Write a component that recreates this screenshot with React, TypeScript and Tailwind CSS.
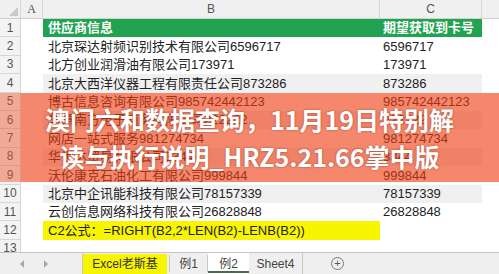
import React from "react";

const rows: { b: string; c: string; gray?: boolean }[] = [
  { b: "北京琛达射频识别技术有限公司6596717", c: "6596717" },
  { b: "北方创业润滑油有限公司173971", c: "173971" },
  { b: "北京大西洋仪器工程有限责任公司873286", c: "873286", gray: true },
  { b: "博古信息咨询有限公司985742442123", c: "985742442123" },
  { b: "华意南方电子商务有限公司222222", c: "222222", gray: true },
  { b: "网店一站式服务981274734", c: "981274734" },
  { b: "华世达贸易有限公司3344", c: "3344", gray: true },
  { b: "沃伦康克石油化工有限公司999844", c: "999844" },
  { b: "北京中企讯能科技有限公司78157339", c: "78157339", gray: true },
  { b: "云创信息网络科技有限公司26828848", c: "26828848" },
];

const font = "font-['Liberation_Sans','Noto_Sans_CJK_SC',sans-serif]";

function RowNum({ n }: { n: number }) {
  return (
    <div className="w-[21px] shrink-0 flex items-center justify-center bg-[#f3f3f3] border-r border-b border-[#d6d6d6] text-[12px] text-[#555]">
      {n}
    </div>
  );
}

export default function App() {
  return (
    <div className={`w-[499px] h-[274px] overflow-hidden flex flex-col bg-white ${font}`}>
      <div className="relative flex-1 overflow-hidden">
        {/* column header */}
        <div className="flex h-[19px] bg-[#f0f0f0] border-b border-[#d0d0d0] text-[12px] text-[#555]">
          <div className="relative w-[21px] shrink-0 border-r border-[#d6d6d6]">
            <div className="absolute right-[2px] bottom-[2px] w-0 h-0 border-l-[9px] border-l-transparent border-b-[9px] border-b-[#c8c8c8]" />
          </div>
          <div className="w-[22px] shrink-0 flex items-center justify-center border-r border-[#d6d6d6] font-['Liberation_Serif',serif]">A</div>
          <div className="w-[337px] shrink-0 flex items-center justify-center border-r border-[#d6d6d6]">B</div>
          <div className="w-[102px] shrink-0 flex items-center justify-center border-r border-[#d6d6d6]">C</div>
          <div className="flex-1" />
        </div>
        {/* row 1 */}
        <div className="flex h-[18.4px]">
          <RowNum n={1} />
          <div className="w-[22px] shrink-0" />
          <div className="w-[337px] shrink-0 bg-[#22a352] text-white font-bold text-[13px] pl-[5px] flex items-center">供应商信息</div>
          <div className="w-[102px] shrink-0 bg-[#22a352] text-white font-bold text-[13px] pl-[3px] flex items-center">期望获取到卡号</div>
          <div className="flex-1" />
        </div>
        {rows.map((r, i) => (
          <div key={i} className="flex h-[18.4px]">
            <RowNum n={i + 2} />
            <div className="w-[22px] shrink-0" />
            <div className={`w-[337px] shrink-0 text-[13px] text-[#222] pl-[5px] flex items-center whitespace-nowrap ${r.gray ? "bg-[#f0f0f0]" : ""}`}>{r.b}</div>
            <div className={`w-[102px] shrink-0 text-[13px] text-[#222] pl-[3px] flex items-center ${r.gray ? "bg-[#f0f0f0]" : ""}`}>{r.c}</div>
            <div className="flex-1" />
          </div>
        ))}
        {/* row 12 */}
        <div className="flex h-[18.4px]">
          <RowNum n={12} />
          <div className="w-[22px] shrink-0" />
          <div className="w-[337px] shrink-0 bg-[#f8f500] text-[13px] text-[#222] pl-[5px] flex items-center whitespace-nowrap">C2公式：=RIGHT(B2,2*LEN(B2)-LENB(B2))</div>
          <div className="w-[102px] shrink-0" />
          <div className="flex-1" />
        </div>
        <div className="flex h-[18.4px]">
          <RowNum n={13} />
        </div>

        {/* overlay banner */}
        <div className="absolute left-0 right-0 top-[93px] h-[89px] flex">
          <div className="w-[21px] bg-[rgba(240,80,40,0.45)]" />
          <div className="flex-1 bg-[rgba(237,61,18,0.62)]" />
        </div>
        <div className="absolute left-0 right-0 top-[93px] h-[89px] flex flex-col items-center justify-center text-white font-bold text-[25px] leading-[37px] font-['Noto_Sans_CJK_SC',sans-serif] [text-shadow:0_0_2px_rgba(90,20,0,0.55)] whitespace-nowrap">
          <div>澳门六和数据查询，11月19日特别解</div>
          <div>读与执行说明_HRZ5.21.66掌中版</div>
        </div>
      </div>

      {/* sheet tabs */}
      <div className="h-[22px] shrink-0 flex items-stretch bg-[#efefef] border-t border-[#c4c4c4] text-[12px] text-[#333]">
        <div className="w-[83px] shrink-0 flex items-center border-r border-[#c8c8c8]">
          <div className="ml-[20px] w-0 h-0 border-y-[4px] border-y-transparent border-r-[4px] border-r-[#aaa]" />
          <div className="ml-[20px] w-0 h-0 border-y-[4px] border-y-transparent border-l-[4px] border-l-[#aaa]" />
        </div>
        <div className="w-[84px] shrink-0 bg-[#f8f500] flex items-center justify-center mt-[1px]">Excel老斯基</div>
        <div className="w-[1px] bg-[#c8c8c8] my-[2px] ml-[2px]" />
        <div className="w-[37px] shrink-0 flex items-center justify-center text-[#444]">例1</div>
        <div className="w-[1px] bg-[#c8c8c8] my-[2px]" />
        <div className="w-[41px] shrink-0 flex items-center justify-center bg-white text-[#444] relative">
          例2
          <div className="absolute left-0 right-0 bottom-[1px] h-[2px] bg-[#4a6b4a]" />
        </div>
        <div className="w-[54px] shrink-0 flex items-center justify-center text-[#444] border-r border-[#c8c8c8]">Sheet4</div>
        <div className="ml-[28px] flex items-center">
          <div className="w-[13px] h-[13px] rounded-full border border-[#777] flex items-center justify-center text-[11px] leading-none text-[#555]">+</div>
        </div>
      </div>
    </div>
  );
}
